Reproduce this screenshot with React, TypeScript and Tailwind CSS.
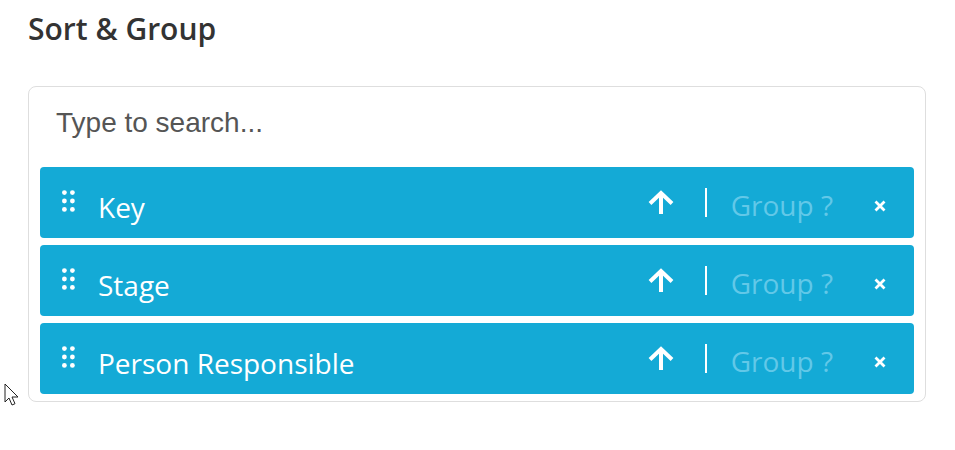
import React from "react";

const fields = ["Key", "Stage", "Person Responsible"];

function DragDots() {
  return (
    <svg width="13" height="22" viewBox="0 0 13 22" className="shrink-0">
      {[0, 1, 2].map((r) =>
        [0, 1].map((c) => (
          <circle key={`${r}-${c}`} cx={2.4 + c * 8} cy={2.6 + r * 8.4} r="2.4" fill="white" />
        ))
      )}
    </svg>
  );
}

function ArrowUp() {
  return (
    <svg width="26" height="24" viewBox="0 0 26 24" className="shrink-0">
      <path d="M13 24V3.5M2 13.5L13 3l11 10.5" stroke="white" strokeWidth="4" fill="none" />
    </svg>
  );
}

function Cross() {
  return (
    <svg width="12" height="12" viewBox="0 0 12 12" className="shrink-0">
      <path d="M1.5 1.5l9 9M10.5 1.5l-9 9" stroke="white" strokeWidth="2.8" />
    </svg>
  );
}

function Row({ label }: { label: string }) {
  return (
    <div className="flex h-[71px] items-center rounded-[4px] bg-[#14aad6] pl-[22px] pr-[28px] text-white">
      <div className="-mt-[3px]">
        <DragDots />
      </div>
      <span className="ml-[23px] mt-[8px] flex-1 text-[28px] leading-none">{label}</span>
      <div className="-mt-[2px]">
        <ArrowUp />
      </div>
      <div className="ml-[31px] h-[29px] w-[2px] bg-white" />
      <span className="ml-[24px] mt-[4px] text-[28px] leading-none text-[#62c8e8]">Group ?</span>
      <div className="ml-[41px] mt-[6px]">
        <Cross />
      </div>
    </div>
  );
}

export default function App() {
  return (
    <div className="relative h-[450px] w-[955px] bg-white font-['Open_Sans',sans-serif]">
      <div className="px-[28px] pt-[10px]">
        <h2 className="text-[30px] font-semibold leading-[38px] text-[#333]">Sort &amp; Group</h2>

        <div className="mt-[38px] w-[898px] rounded-[8px] border border-[#dedede] px-[11px] pb-[7px]">
          <div className="flex h-[80px] items-start pl-[16px] pt-[20px]">
            <span className="font-['Liberation_Sans',Arial,sans-serif] text-[28px] leading-[32px] text-[#555]">
              Type to search...
            </span>
          </div>
          <div className="flex flex-col gap-[7px]">
            {fields.map((f) => (
              <Row key={f} label={f} />
            ))}
          </div>
        </div>
      </div>

      {/* mouse pointer */}
      <svg className="absolute left-[4px] top-[383px]" width="16" height="24" viewBox="0 0 16 24">
        <path d="M1 1v18l4-4 3 7 3-1.3-3-6.7h6z" fill="white" stroke="#222" strokeWidth="1" strokeLinejoin="miter" />
      </svg>
    </div>
  );
}
